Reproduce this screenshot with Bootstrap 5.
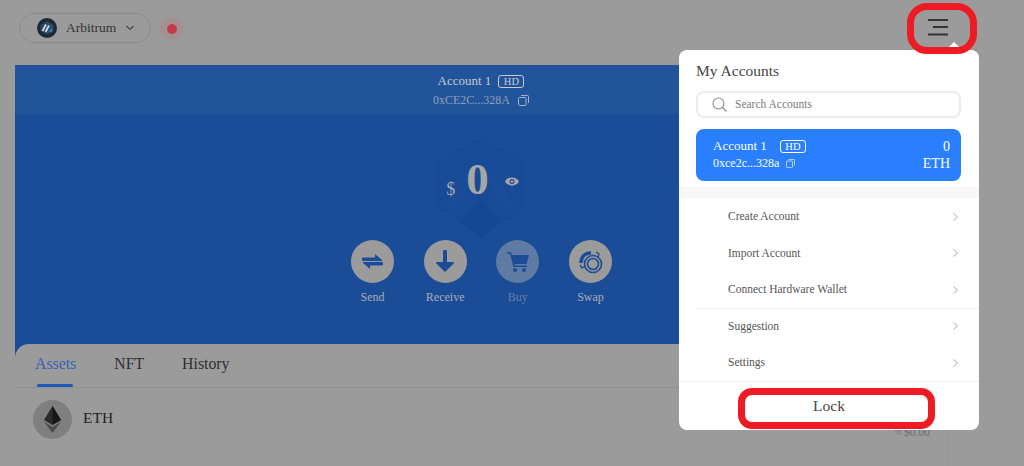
<!DOCTYPE html>
<html lang="en">
<head>
    <meta charset="UTF-8">
    <meta name="viewport" content="width=device-width, initial-scale=1.0">
    <title>Wallet</title>
    <link href="https://cdn.jsdelivr.net/npm/bootstrap@5.3.0/dist/css/bootstrap.min.css" rel="stylesheet">
    <style>
        html, body { height: 466px; overflow: hidden; }
        body { background: #9b9b9b; font-family: "Liberation Serif", serif; color: #333; position: relative; }
        .top-bar { height: 65px; padding: 13px 0 0 19px; }
        .net-pill { width: 132px; height: 30px; border: 1px solid #8c8c8c; border-radius: 15px; padding-left: 17px; font-size: 13.5px; color: #333; }
        .net-logo { width: 20px; height: 20px; margin-right: 9px; }
        .net-caret { margin-left: 10px; }
        .status-halo { width: 23px; height: 23px; border-radius: 50%; background: #a39090; margin: 4px 0 0 9px; }
        .status-dot { width: 10px; height: 10px; border-radius: 50%; background: #c43b48; }

        .wallet-panel { margin-left: 15px; width: 933px; height: 401px; border-right: 1px solid #939393; }
        .hero { height: 293px; background: #1a4c98; position: relative; }
        .hero-band { height: 49px; background: #22549b; color: #c5c9d0; font-size: 13px; line-height: 16px; padding-top: 8px; }
        .hero-addr { color: #8ea0bd; font-size: 12px; gap: 8px; margin-top: 3px; }
        .hd-tag { border: 1px solid currentColor; border-radius: 3px; font-size: 10.5px; line-height: 11px; padding: 0 4.5px; margin-left: 7px; }
        .hd-tag-wide { margin-left: 13px; }
        .hero-balance { height: 126px; position: relative; color: #a6a6a6; }
        .hex-mark { position: absolute; left: 421px; top: 23px; width: 90px; height: 101px; }
        .bal-row { position: relative; padding-top: 40px; }
        .bal-dollar { font-size: 18px; margin: 25px 11px 0 3px; line-height: 20px; }
        .bal-num { font-size: 45px; line-height: 50px; font-weight: 700; }
        .bal-eye { margin: 23px 0 0 16px; width: 14px; height: 9px; }
        .action-row { gap: 29.7px; padding-left: 1px; }
        .action-item { width: 43px; font-size: 12px; color: #a9acb2; line-height: 13px; }
        .action-circle { width: 43px; height: 43px; border-radius: 50%; background: #9b9b9b; margin-bottom: 8px; }
        .action-off { color: #6480ab; }
        .action-off .action-circle { background: #5f7ba4; }
        .action-item span { white-space: nowrap; }

        .asset-sheet { margin-top: -14px; height: 122px; background: #9b9b9b; position: relative; border-radius: 14px 0 0 0; }
        .tab-bar { height: 44px; border-bottom: 1px solid #919191; padding-left: 20px; gap: 38px; font-size: 15.8px; color: #2f2f2f; padding-top: 8px; }
        .tab-on { color: #3a62b3; position: relative; }
        .tab-on::after { content: ""; position: absolute; left: 2px; right: 3px; bottom: 0; height: 3px; border-radius: 2px; background: #1f58b6; }
        .asset-row { padding: 12px 0 0 18px; gap: 11px; font-size: 15.5px; color: #1f1f1f; }
        .asset-name { margin-bottom: 3px; }
        .eth-disc { width: 39px; height: 39px; border-radius: 50%; background: #7f7f7f; }
        .asset-usd { position: absolute; right: 17px; top: 80px; font-size: 11.5px; color: #6e6e6e; }

        .menu-pop { position: absolute; left: 679px; top: 50px; width: 300px; height: 380px; background: #fff; border-radius: 8px; z-index: 2; color: #555; }
        .menu-pop::before { content: ""; position: absolute; right: 17px; top: -8px; border: 8px solid transparent; border-top: 0; border-bottom-color: #fff; }
        .menu-title { font-size: 15.5px; color: #444; padding: 12px 17px 0; line-height: 18px; }
        .search-box { margin: 11px 18px 0 17px; height: 27px; border: 2px solid #ececec; border-radius: 8px; padding-left: 14px; gap: 8px; font-size: 11.5px; color: #7a7a7a; }
        .acct-card { margin: 11px 18px 0 17px; height: 52px; border-radius: 8px; background: #2a7fff; color: #fff; padding: 9px 11px 0 17px; }
        .acct-name { font-size: 13px; line-height: 16px; }
        .acct-addr { font-size: 12px; line-height: 14px; margin-top: 2px; gap: 7px; }
        .acct-right { font-size: 14px; line-height: 17px; text-align: right; }
        .menu-gap { height: 11px; background: #f7f7f7; margin-top: 6px; }
        .menu-link { height: 36.5px; padding: 1px 21px 0 49px; font-size: 11.5px; color: #555; }
        .menu-sep { height: 1px; background: #f0f0f0; margin: 0 0 -1px 17px; }
        .menu-sep-full { height: 1px; background: #efefef; }
        .lock-btn { height: 49px; font-size: 15.5px; color: #444; padding-bottom: 1px; }

        .red-mark { position: absolute; border: 7px solid #ed1c24; z-index: 3; }
        .mark-burger { left: 907px; top: 3px; width: 70px; height: 51px; border-radius: 20px; }
        .mark-lock { left: 738px; top: 388px; width: 197px; height: 41px; border-radius: 14px; }
        .burger-btn { position: absolute; left: 928px; top: 15px; z-index: 1; }
    </style>
</head>
<body>
    <div class="top-bar d-flex">
        <div class="net-pill d-flex align-items-center">
            <svg class="net-logo" viewBox="0 0 20 20">
                <circle cx="10" cy="10" r="10" fill="#1c2833"/>
                <path d="M3.500 13 3.500 7 10 3.200 16.500 7V13L10 16.800Z" fill="#2a4a66"/>
                <path d="M5.500 13l3.500-6.500M8.500 14l3.500-6.500" stroke="#d6d6d6" stroke-width="1.800"/>
                <path d="M12 13.500l2-3.500 1.500 2.500-1 2z" fill="#2f80c4"/>
            </svg>
            <span>Arbitrum</span>
            <svg class="net-caret" width="8" height="6" viewBox="0 0 8 6"><path d="M.5 1l3.500 3.500L7.500 1" fill="none" stroke="#444" stroke-width="1.100"/></svg>
        </div>
        <div class="status-halo d-flex align-items-center justify-content-center"><div class="status-dot"></div></div>
    </div>

    <div class="burger-btn">
        <svg width="20" height="18" viewBox="0 0 20 18"><path d="M0 1h20M5 8h15M0 15.500h20" stroke="#333" stroke-width="1.800"/></svg>
    </div>

    <div class="wallet-panel">
        <div class="hero">
            <div class="hero-band text-center">
                <div class="d-flex justify-content-center align-items-center">Account 1 <span class="hd-tag">HD</span></div>
                <div class="hero-addr d-flex justify-content-center align-items-center">
                    <span>0xCE2C...328A</span>
                    <svg width="11" height="11" viewBox="0 0 11 11" fill="none" stroke="#a4b2c9"><rect x="0.500" y="2.500" width="7.500" height="8" rx="1"/><path d="M3 0.500h6.500a1 1 0 0 1 1 1V8"/></svg>
                </div>
            </div>
            <div class="hero-balance">
                <svg class="hex-mark" viewBox="0 0 90 101">
                    <path d="M45 0 90 27V71L66 85 45 62 24 85 0 71V27Z" fill="#174a97"/>
                    <path d="M45 62 66 85 45 101 24 85Z" fill="#144895"/>
                    <path d="M10 68 37 28h14L18 74ZM80 68 58 36l-7 10 22 29Z" fill="#1a4c98"/>
                </svg>
                <div class="bal-row d-flex justify-content-center">
                    <span class="bal-dollar">$</span>
                    <span class="bal-num">0</span>
                    <svg class="bal-eye" viewBox="0 0 14 9"><path d="M0 4.500C3 -1 11 -1 14 4.500 11 10 3 10 0 4.500Z" fill="#a6a6a6"/><circle cx="7" cy="4.500" r="2.500" fill="#1a4c98"/><circle cx="7" cy="4.500" r="1.300" fill="#a6a6a6"/></svg>
                </div>
            </div>
            <div class="action-row d-flex justify-content-center">
                <div class="action-item d-flex flex-column align-items-center">
                    <div class="action-circle d-flex align-items-center justify-content-center">
                        <svg width="21" height="17" viewBox="0 0 21 17" fill="#1a4c98"><path d="M1.500 4.500H13V1l7.500 6.500-1 .5H1.500a1.750 1.750 0 0 1 0-3.500ZM19.500 12.500H8V16L.5 9.500l1-.5h18a1.750 1.750 0 0 1 0 3.500Z"/></svg>
                    </div>
                    <span>Send</span>
                </div>
                <div class="action-item d-flex flex-column align-items-center">
                    <div class="action-circle d-flex align-items-center justify-content-center">
                        <svg width="18" height="23" viewBox="0 0 18 23" fill="#1a4c98"><path d="M7 1.500a2 2 0 0 1 4 0V12h6a1 1 0 0 1 .7 1.600L9 22 .3 13.600A1 1 0 0 1 1 12h6Z"/></svg>
                    </div>
                    <span>Receive</span>
                </div>
                <div class="action-item action-off d-flex flex-column align-items-center">
                    <div class="action-circle d-flex align-items-center justify-content-center">
                        <svg width="22" height="20" viewBox="0 0 22 20" fill="#1a4c98"><path d="M0 0h4l.8 3H22l-2.500 9H7.500l.4 1.500H20V15H6.500L3 1.500H0Z"/><circle cx="8" cy="18" r="2"/><circle cx="17" cy="18" r="2"/></svg>
                    </div>
                    <span>Buy</span>
                </div>
                <div class="action-item d-flex flex-column align-items-center">
                    <div class="action-circle d-flex align-items-center justify-content-center">
                        <svg width="24" height="24" viewBox="0 0 24 24" fill="none" stroke="#1a4c98"><circle cx="14" cy="14" r="8.500" stroke-width="1.600"/><circle cx="14" cy="14" r="5.500" stroke-width="1.600"/><path d="M2 13C2 7 6 3 12 3" stroke-width="3.500"/><path d="M17 2l3 2-1 3" stroke-width="1.400"/><path d="M1 15l2 3 3-2" stroke-width="1.400"/></svg>
                    </div>
                    <span>Swap</span>
                </div>
            </div>
        </div>
        <div class="asset-sheet">
            <div class="tab-bar d-flex">
                <span class="tab-on">Assets</span>
                <span>NFT</span>
                <span>History</span>
            </div>
            <div class="asset-row d-flex align-items-center">
                <div class="eth-disc d-flex align-items-center justify-content-center">
                    <svg width="17" height="27" viewBox="0 0 17 27"><path d="M8.500 0 0 14l8.500 5 8.500-5Z" fill="#2b2b2b"/><path d="M8.500 0v19l8.500-5Z" fill="#171717"/><path d="M0 15.500 8.500 27 17 15.500 8.500 21Z" fill="#4a4a4a"/></svg>
                </div>
                <span class="asset-name">ETH</span>
            </div>
            <div class="asset-usd">≈ $0.00</div>
        </div>
    </div>

    <div class="menu-pop">
        <div class="menu-title">My Accounts</div>
        <div class="search-box d-flex align-items-center">
            <svg width="15" height="15" viewBox="0 0 15 15" fill="none" stroke="#8a8a8a" stroke-width="1.100"><circle cx="6.500" cy="6.500" r="5.500"/><path d="M10.500 10.500 14.500 14.500"/></svg>
            <span>Search Accounts</span>
        </div>
        <div class="acct-card d-flex justify-content-between">
            <div>
                <div class="acct-name d-flex align-items-center">Account 1 <span class="hd-tag hd-tag-wide">HD</span></div>
                <div class="acct-addr d-flex align-items-center">
                    <span>0xce2c...328a</span>
                    <svg width="9" height="9" viewBox="0 0 11 11" fill="none" stroke="#d9e8ff"><rect x="0.500" y="2.500" width="7.500" height="8" rx="1"/><path d="M3 0.500h6.500a1 1 0 0 1 1 1V8"/></svg>
                </div>
            </div>
            <div class="acct-right">0<br>ETH</div>
        </div>
        <div class="menu-gap"></div>
        <div class="menu-link d-flex align-items-center justify-content-between"><span>Create Account</span><svg width="5" height="8" viewBox="0 0 5 8"><path d="M.5 .5 4.500 4 .5 7.500" fill="none" stroke="#aaa"/></svg></div>
        <div class="menu-link d-flex align-items-center justify-content-between"><span>Import Account</span><svg width="5" height="8" viewBox="0 0 5 8"><path d="M.5 .5 4.500 4 .5 7.500" fill="none" stroke="#aaa"/></svg></div>
        <div class="menu-link d-flex align-items-center justify-content-between"><span>Connect Hardware Wallet</span><svg width="5" height="8" viewBox="0 0 5 8"><path d="M.5 .5 4.500 4 .5 7.500" fill="none" stroke="#aaa"/></svg></div>
        <div class="menu-sep"></div>
        <div class="menu-link d-flex align-items-center justify-content-between"><span>Suggestion</span><svg width="5" height="8" viewBox="0 0 5 8"><path d="M.5 .5 4.500 4 .5 7.500" fill="none" stroke="#aaa"/></svg></div>
        <div class="menu-link d-flex align-items-center justify-content-between"><span>Settings</span><svg width="5" height="8" viewBox="0 0 5 8"><path d="M.5 .5 4.500 4 .5 7.500" fill="none" stroke="#aaa"/></svg></div>
        <div class="menu-sep-full"></div>
        <div class="lock-btn d-flex align-items-center justify-content-center">Lock</div>
    </div>

    <div class="red-mark mark-burger"></div>
    <div class="red-mark mark-lock"></div>

    <script src="https://cdn.jsdelivr.net/npm/bootstrap@5.3.0/dist/js/bootstrap.bundle.min.js"></script>
</body>
</html>
